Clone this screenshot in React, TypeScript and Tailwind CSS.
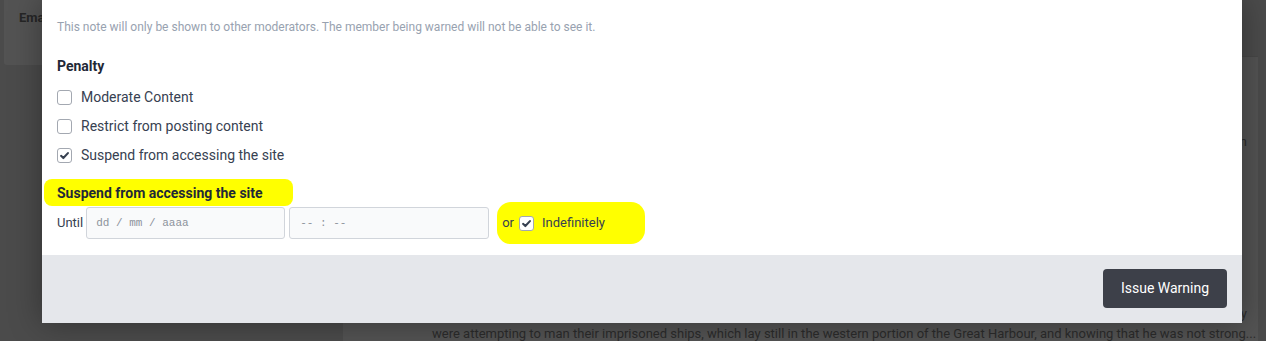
import React from "react";

const Check = () => (
  <svg viewBox="0 0 16 16" className="w-[11px] h-[11px]" fill="none">
    <path d="M3 8.5l3.3 3.2L13 4.5" stroke="#374151" strokeWidth="3" strokeLinecap="round" strokeLinejoin="round" />
  </svg>
);

const Box = ({ checked }: { checked?: boolean }) => (
  <span className="flex items-center justify-center w-[15px] h-[15px] rounded-[3px] border border-[#a3a8b1] bg-white shrink-0">
    {checked && <Check />}
  </span>
);

const OPTIONS = [
  { label: "Moderate Content", checked: false },
  { label: "Restrict from posting content", checked: false },
  { label: "Suspend from accessing the site", checked: true },
];

export default function App() {
  return (
    <div className="relative w-[1266px] h-[341px] overflow-hidden bg-[#4b4b4b]" style={{ fontFamily: "Roboto, 'Liberation Sans', sans-serif" }}>
      {/* page behind the overlay */}
      <div className="flex h-full">
        <div className="w-[343px] pl-[4px] shrink-0">
          <div className="h-[65px] bg-[#535353] rounded-b-[3px] pl-[15px] pt-[5px]">
            <span className="text-[13px] font-bold text-[#262626]">Email</span>
          </div>
        </div>
        <div className="w-[915px] flex flex-col pt-[56px]">
          <div className="flex-1 bg-[#535353] border-t border-[#474747] flex flex-col text-[13px] text-[#2b2b2b] pl-[89px] pr-[11px]">
            <div className="h-[75px]" />
            <div className="whitespace-nowrap text-right leading-[20px]">leaving the system</div>
            <div className="h-[152px]" />
            <div className="whitespace-nowrap text-right leading-[20px]">the Syracusans, seeing that they</div>
            <div className="whitespace-nowrap leading-[20px]">were attempting to man their imprisoned ships, which lay still in the western portion of the Great Harbour, and knowing that he was not strong...</div>
          </div>
        </div>
      </div>

      {/* modal */}
      <div className="absolute left-[42px] top-0 w-[1200px] shadow-[0_0_30px_rgba(0,0,0,0.35)]">
        <div className="bg-white pl-[15px] pr-[15px] pt-[19px] pb-[16px] flex flex-col">
          <p className="text-[12px] leading-[16px] text-[#98a2b0]">
            This note will only be shown to other moderators. The member being warned will not be able to see it.
          </p>
          <h3 className="mt-[21px] text-[14px] leading-[20px] font-bold text-[#1f2937]">Penalty</h3>
          <div className="mt-[11px] flex flex-col gap-[9px]">
            {OPTIONS.map((o) => (
              <label key={o.label} className="flex items-center gap-[9px] h-[20px] text-[14px] text-[#374151]">
                <Box checked={o.checked} />
                {o.label}
              </label>
            ))}
          </div>
          <div className="mt-[14px] -ml-[13px]">
            <span className="inline-block bg-[#ffff00] rounded-[8px] pl-[13px] pr-[30px] pt-[4px] pb-[3px] text-[14px] leading-[20px] font-bold text-[#1f2937]">
              Suspend from accessing the site
            </span>
          </div>
          <div className="mt-[1px] flex items-center gap-[4px] text-[13px] text-[#374151]">
            <span className="mr-[-1px]">Until</span>
            <div className="w-[199px] h-[32px] rounded-[3px] border border-[#d1d5db] bg-[#f9fafb] flex items-center pl-[9px] text-[11px] text-[#8d939c]" style={{ fontFamily: "'Liberation Mono', monospace" }}>
              dd / mm / aaaa
            </div>
            <div className="w-[200px] h-[32px] rounded-[3px] border border-[#d1d5db] bg-[#f9fafb] flex items-center pl-[10px] text-[11px] text-[#8d939c]" style={{ fontFamily: "'Liberation Mono', monospace" }}>
              -- : --
            </div>
            <div className="ml-[4px] -my-[6px] flex items-center gap-[8px] bg-[#ffff00] rounded-[14px] pl-[5px] pr-[40px] py-[11px]">
              <span className="-mr-[3px]">or</span>
              <Box checked />
              <span>Indefinitely</span>
            </div>
          </div>
        </div>
        <div className="bg-[#e5e7eb] h-[68px] flex items-center justify-end pr-[15px] pb-[1px]">
          <button className="w-[124px] h-[39px] rounded-[4px] bg-[#3d4049] text-white text-[14px]">Issue Warning</button>
        </div>
      </div>
    </div>
  );
}
